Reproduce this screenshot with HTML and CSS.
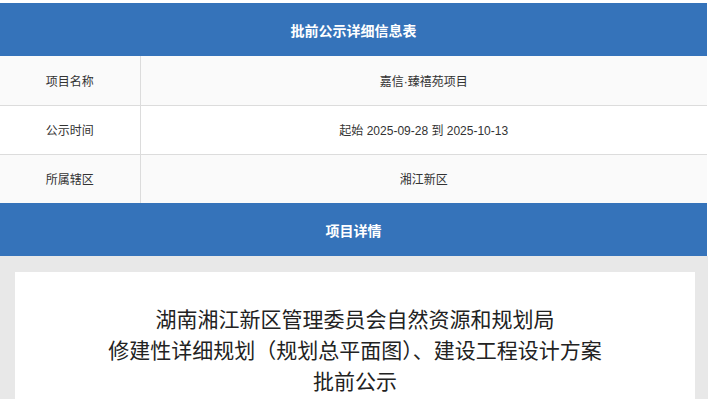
FILE: index.html
```html
<!DOCTYPE html>
<html lang="zh-CN">
<head>
  <meta charset="UTF-8" />
  <meta name="viewport" content="width=device-width, initial-scale=1.0" />
  <title>批前公示详细信息表</title>
  <link rel="stylesheet" href="styles.css">
</head>
<body>
  <div class="page">
    <table class="info-table">
      <tr>
        <th colspan="2" class="table-head">批前公示详细信息表</th>
      </tr>
      <tr class="row-alt">
        <td class="label">项目名称</td>
        <td class="value">嘉信·臻禧苑项目</td>
      </tr>
      <tr>
        <td class="label">公示时间</td>
        <td class="value">起始 2025-09-28 到 2025-10-13</td>
      </tr>
      <tr class="row-alt">
        <td class="label">所属辖区</td>
        <td class="value">湘江新区</td>
      </tr>
      <tr>
        <th colspan="2" class="table-head">项目详情</th>
      </tr>
    </table>

    <div class="detail">
      <div class="detail-card">
        <p class="notice-title">湖南湘江新区管理委员会自然资源和规划局<br>修建性详细规划（规划总平面图）、建设工程设计方案<br>批前公示</p>
      </div>
    </div>
  </div>
</body>
</html>
```

FILE: styles.css
```css
* {
  box-sizing: border-box;
}

body {
  margin: 0;
  background: #fff;
  font-family: "Liberation Sans", "Noto Sans CJK SC", sans-serif;
  color: #333;
  overflow: hidden;
}

.page {
  width: 708px;
  padding-top: 3px;
}

.info-table {
  width: 707px;
  border-collapse: collapse;
  font-size: 12px;
}

.table-head {
  background: #3573ba;
  color: #fff;
  font-size: 14px;
  font-weight: bold;
  height: 53px;
  text-align: center;
  padding: 0;
}

.info-table td {
  height: 49px;
  text-align: center;
  border-bottom: 1px solid #dcdcdc;
  padding: 0;
}

.info-table tr:nth-last-child(2) td {
  border-bottom: none;
}

.info-table .label {
  width: 140px;
  border-right: 1px solid #dcdcdc;
}

.row-alt td {
  background: #fafafa;
}

.detail {
  background: #e8e8e8;
  padding: 16px 13px 0 15px;
  height: 150px;
}

.detail-card {
  background: #fff;
  height: 100%;
  padding-top: 33px;
}

.notice-title {
  margin: 0;
  text-align: center;
  font-family: "Liberation Serif", "Noto Sans CJK SC", serif;
  font-size: 21px;
  line-height: 31px;
  color: #222;
}
```
